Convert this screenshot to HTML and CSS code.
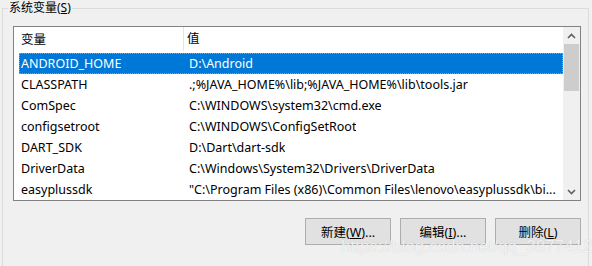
FILE: index.html
```html
<!DOCTYPE html>
<html lang="zh-CN">
<head>
    <meta charset="UTF-8">
    <title>系统变量</title>
    <link rel="stylesheet" href="styles.css">
</head>
<body>

<fieldset class="group">
    <legend>系统变量(<u>S</u>)</legend>

    <div class="listbox">
        <div class="table">
            <div class="head">
                <div class="col-name">变量</div>
                <div class="col-value">值</div>
            </div>
            <div class="rows" id="rows"></div>
        </div>
        <div class="scrollbar">
            <div class="arrow">
                <svg width="9" height="6" viewBox="0 0 9 6"><path d="M1 5 L4.5 1.5 L8 5" fill="none" stroke="#606060" stroke-width="1.6"/></svg>
            </div>
            <div class="thumb"></div>
            <div class="track"></div>
            <div class="arrow">
                <svg width="9" height="6" viewBox="0 0 9 6"><path d="M1 1 L4.5 4.5 L8 1" fill="none" stroke="#606060" stroke-width="1.6"/></svg>
            </div>
        </div>
    </div>

    <div class="actions">
        <button>新建(<u>W</u>)...</button>
        <button>编辑(<u>I</u>)...</button>
        <button>删除(<u>L</u>)</button>
    </div>
    <div class="watermark">https://blog.csdn.net/qq_38774121</div>
</fieldset>

<script>
    // 系统变量列表
    const vars = [
        { name: "ANDROID_HOME", value: "D:\\Android" },
        { name: "CLASSPATH", value: ".;%JAVA_HOME%\\lib;%JAVA_HOME%\\lib\\tools.jar" },
        { name: "ComSpec", value: "C:\\WINDOWS\\system32\\cmd.exe" },
        { name: "configsetroot", value: "C:\\WINDOWS\\ConfigSetRoot" },
        { name: "DART_SDK", value: "D:\\Dart\\dart-sdk" },
        { name: "DriverData", value: "C:\\Windows\\System32\\Drivers\\DriverData" },
        { name: "easyplussdk", value: "\"C:\\Program Files (x86)\\Common Files\\lenovo\\easyplussdk\\bi..." }
    ];

    const rows = document.getElementById('rows');
    vars.forEach((v, i) => {
        const row = document.createElement('div');
        row.classList.add('row');
        if (i === 0) row.classList.add('selected');
        row.innerHTML = `<div class="col-name"></div><div class="col-value"></div>`;
        row.children[0].innerText = v.name;
        row.children[1].innerText = v.value;
        rows.appendChild(row);
    });
</script>
</body>
</html>
```

FILE: styles.css
```css
body {
    margin: 0;
    background: #f0f0f0;
    font-family: "Noto Sans", "Noto Sans CJK SC", sans-serif;
    font-size: 12.5px;
    color: #000;
    height: 266px;
    overflow: hidden;
}

.group {
    position: relative;
    margin: 0 3px 0 2px;
    padding: 0 7px 0 10px;
    border: 1px solid #dcdcdc;
    height: 300px;
}

.group legend {
    padding: 0 1px;
    margin-left: -5px;
    line-height: 16px;
    font-size: 12px;
}

.listbox {
    display: flex;
    margin-top: 10px;
    height: 173px;
    border: 1px solid #828282;
    background: #fff;
}

.table {
    flex: 1;
    display: flex;
    flex-direction: column;
}

.head {
    display: flex;
    height: 24px;
    align-items: center;
}

.head .col-name {
    width: 162px;
    padding-left: 7px;
    border-right: 1px solid #e5e5e5;
    height: 24px;
    line-height: 26px;
}

.head .col-value {
    padding-left: 3px;
    line-height: 26px;
}

.rows {
    padding: 2px 0 0 5px;
}

.row {
    display: flex;
    height: 21px;
    line-height: 21px;
}

.col-name {
    flex-shrink: 0;
}

.col-value {
    padding-left: 4px;
    white-space: nowrap;
    overflow: hidden;
}

.rows .col-name {
    width: 164px;
    padding-left: 2px;
}

.selected {
    background: #0078d7;
    color: #fff;
    outline: 1px dotted #f08c28;
    outline-offset: -1px;
}

.scrollbar {
    width: 17px;
    display: flex;
    flex-direction: column;
    background: #f0f0f0;
}

.arrow {
    height: 17px;
    display: flex;
    align-items: center;
    justify-content: center;
}

.thumb {
    height: 47px;
    margin: 0 1px;
    background: #cdcdcd;
}

.track {
    flex: 1;
}

.actions {
    display: flex;
    justify-content: flex-end;
    gap: 9px;
    margin-top: 17px;
}

button {
    width: 86px;
    height: 27px;
    background: #e1e1e1;
    border: 1px solid #adadad;
    font-family: "Noto Sans", "Noto Sans CJK SC", sans-serif;
    font-size: 12.5px;
    color: #000;
    padding: 0;
}

.watermark {
    position: absolute;
    left: 338px;
    top: 221px;
    font-family: "Liberation Sans", Arial, sans-serif;
    font-size: 17px;
    color: rgba(255, 255, 255, 0.75);
    text-shadow: 0 0 1px rgba(120, 120, 120, 0.35);
    pointer-events: none;
}
```
